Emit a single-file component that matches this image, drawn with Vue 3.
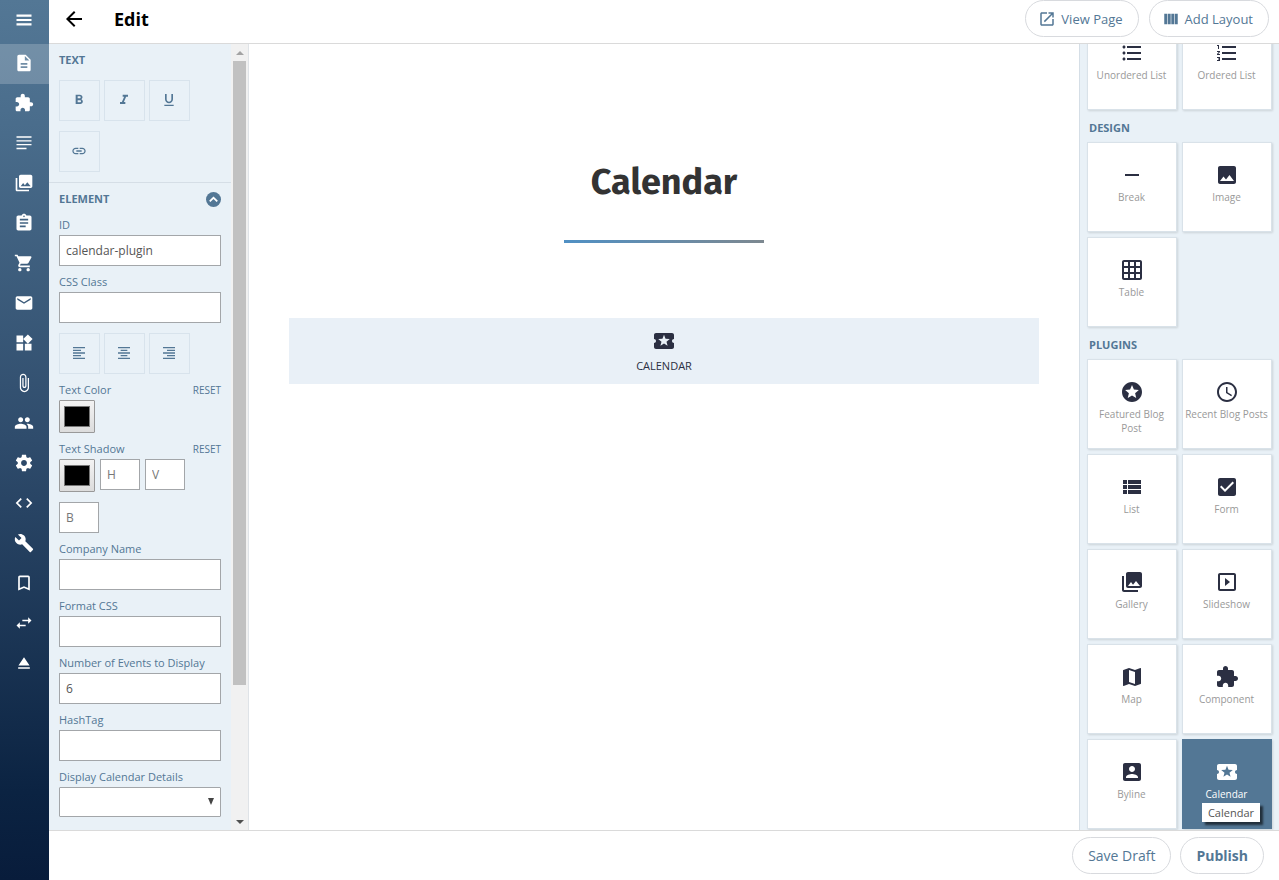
<template>
  <div class="app">
    <nav class="sidebar" aria-label="Main">
      <button class="side-item side-toggle" type="button" aria-label="Menu">
        <svg viewBox="0 0 24 24"><path :d="icons.menu" /></svg>
      </button>
      <a
        v-for="item in sideItems"
        :key="item.icon"
        href="#"
        class="side-item"
        :class="{ active: item.icon === 'file' }"
        :aria-label="item.label"
        @click.prevent
      >
        <svg viewBox="0 0 24 24"><path :d="icons[item.icon]" /></svg>
      </a>
    </nav>

    <div class="workspace">
      <header class="topbar">
        <button class="back" type="button" aria-label="Back">
          <svg viewBox="0 0 24 24"><path :d="icons.back" /></svg>
        </button>
        <h1>Edit</h1>
        <div class="topbar-actions">
          <button class="pill" type="button">
            <svg viewBox="0 0 24 24"><path :d="icons.open" /></svg>
            View Page
          </button>
          <button class="pill" type="button">
            <svg viewBox="0 0 24 24"><path :d="icons.columns" /></svg>
            Add Layout
          </button>
        </div>
      </header>

      <div class="editor">
        <aside class="settings">
          <form class="settings-body" @submit.prevent>
            <section class="group">
              <h2>Text</h2>
              <div class="tools">
                <button v-for="t in textTools" :key="t.icon" class="tool" type="button" :aria-label="t.label">
                  <svg viewBox="0 0 24 24"><path :d="icons[t.icon]" /></svg>
                </button>
              </div>
            </section>

            <section class="group element">
              <div class="group-head">
                <h2>Element</h2>
                <button class="collapse" type="button" aria-label="Collapse">
                  <svg viewBox="0 0 24 24"><path :d="icons.up" /></svg>
                </button>
              </div>

              <div class="field">
                <label for="el-id">ID</label>
                <input id="el-id" v-model="form.id" type="text" />
              </div>
              <div class="field">
                <label for="el-class">CSS Class</label>
                <input id="el-class" v-model="form.cssClass" type="text" />
              </div>

              <div class="tools align">
                <button v-for="t in alignTools" :key="t.icon" class="tool" type="button" :aria-label="t.label">
                  <svg viewBox="0 0 24 24"><path :d="icons[t.icon]" /></svg>
                </button>
              </div>

              <div class="field">
                <div class="field-head">
                  <label for="el-color">Text Color</label>
                  <button class="reset" type="button" @click="form.color = '#000000'">Reset</button>
                </div>
                <input id="el-color" v-model="form.color" type="color" />
              </div>
              <div class="field">
                <div class="field-head">
                  <label for="el-shadow">Text Shadow</label>
                  <button class="reset" type="button" @click="form.shadow = '#000000'">Reset</button>
                </div>
                <div class="shadow-row">
                  <input id="el-shadow" v-model="form.shadow" type="color" />
                  <input v-for="p in ['H', 'V', 'B']" :key="p" class="mini" type="text" :placeholder="p" :aria-label="p" />
                </div>
              </div>

              <div v-for="f in extraFields" :key="f.key" class="field">
                <label :for="'el-' + f.key">{{ f.label }}</label>
                <input :id="'el-' + f.key" v-model="form[f.key]" type="text" />
              </div>
              <div class="field">
                <label for="el-details">Display Calendar Details</label>
                <div class="select-wrap">
                  <select id="el-details" v-model="form.details">
                    <option value=""></option>
                    <option value="yes">Yes</option>
                    <option value="no">No</option>
                  </select>
                  <span class="caret" aria-hidden="true"></span>
                </div>
              </div>
            </section>
          </form>
          <div class="scrollbar" aria-hidden="true">
            <span class="arrow arrow-up"></span>
            <div class="track"><div class="thumb"></div></div>
            <span class="arrow arrow-down"></span>
          </div>
        </aside>

        <main class="canvas">
          <h2 class="page-title">Calendar</h2>
          <div class="rule"></div>
          <div class="block">
            <svg viewBox="0 0 24 24"><path :d="icons.ticket" /></svg>
            <span>Calendar</span>
          </div>
        </main>

        <aside ref="palette" class="palette">
          <section v-for="group in palettes" :key="group.title">
            <h2 v-if="group.title">{{ group.title }}</h2>
            <div class="cards">
              <button
                v-for="c in group.items"
                :key="c.label"
                class="card"
                :class="{ selected: c.icon === 'ticket' }"
                type="button"
              >
                <svg viewBox="0 0 24 24"><path :d="icons[c.icon]" /></svg>
                <span class="card-label">{{ c.label }}</span>
                <span v-if="c.icon === 'ticket'" class="tooltip" role="tooltip">{{ c.label }}</span>
              </button>
            </div>
          </section>
        </aside>
      </div>

      <footer class="bottombar">
        <button class="pill" type="button">Save Draft</button>
        <button class="pill primary" type="button">Publish</button>
      </footer>
    </div>
  </div>
</template>

<script setup>
import { onMounted, reactive, ref } from 'vue'

// 24x24 icon paths
const icons = {
  menu: 'M3 18.500h18v-2.500H3v2.500zm0-5.250h18v-2.500H3v2.500zm0-7.750v2.500h18V5.500H3z',
  file: 'M14 2H6c-1.1 0-1.99.9-1.99 2L4 20c0 1.1.89 2 1.99 2H18c1.1 0 2-.9 2-2V8l-6-6zm2 16H8v-2h8v2zm0-4H8v-2h8v2zm-3-5V3.500L18.500 9H13z',
  puzzle: 'M20.5 11H19V7c0-1.100-.9-2-2-2h-4V3.500C13 2.120 11.880 1 10.500 1S8 2.120 8 3.500V5H4c-1.100 0-1.990.9-1.990 2v3.800H3.500c1.490 0 2.700 1.210 2.700 2.700s-1.210 2.700-2.700 2.700H2V20c0 1.100.9 2 2 2h3.800v-1.500c0-1.490 1.210-2.700 2.700-2.700 1.490 0 2.700 1.210 2.700 2.700V22H17c1.100 0 2-.9 2-2v-4h1.500c1.380 0 2.500-1.120 2.500-2.500S21.880 11 20.500 11z',
  lines: 'M3 4h18v1.600H3zM3 8.600h18v1.600H3zM3 13.200h18v1.600H3zM3 17.800h12v1.600H3z',
  photos: 'M22 16V4c0-1.100-.9-2-2-2H8c-1.100 0-2 .9-2 2v12c0 1.100.9 2 2 2h12c1.100 0 2-.9 2-2zm-11-4l2.030 2.710L16 11l4 5H8l3-4zM2 6v14c0 1.100.9 2 2 2h14v-2H4V6H2z',
  clipboard: 'M19 3h-4.180C14.400 1.840 13.300 1 12 1c-1.300 0-2.400.84-2.820 2H5c-1.100 0-2 .9-2 2v14c0 1.100.9 2 2 2h14c1.100 0 2-.9 2-2V5c0-1.100-.9-2-2-2zm-7 0c.55 0 1 .45 1 1s-.45 1-1 1-1-.45-1-1 .45-1 1-1zm2 14H7v-2h7v2zm3-4H7v-2h10v2zm0-4H7V7h10v2z',
  cart: 'M7 18c-1.100 0-1.990.9-1.990 2S5.900 22 7 22s2-.9 2-2-.9-2-2-2zM1 2v2h2l3.600 7.590-1.350 2.450c-.16.28-.25.61-.25.96 0 1.100.9 2 2 2h12v-2H7.420c-.14 0-.25-.11-.25-.25l.03-.12.9-1.630h7.450c.75 0 1.410-.41 1.750-1.030l3.580-6.490c.08-.14.12-.31.12-.48 0-.55-.45-1-1-1H5.210l-.94-2H1zm16 16c-1.100 0-1.990.9-1.990 2s.89 2 1.990 2 2-.9 2-2-.9-2-2-2z',
  mail: 'M20 4H4c-1.100 0-1.990.9-1.990 2L2 18c0 1.100.9 2 2 2h16c1.100 0 2-.9 2-2V6c0-1.100-.9-2-2-2zm0 4l-8 5-8-5V6l8 5 8-5v2z',
  widgets: 'M13 13v8h8v-8h-8zM3 21h8v-8H3v8zM3 3v8h8V3H3zm13.660-1.310L11 7.340 16.660 13l5.660-5.660-5.660-5.650z',
  clip: 'M16.500 6v11.500c0 2.210-1.790 4-4 4s-4-1.790-4-4V5c0-1.380 1.120-2.500 2.500-2.500s2.500 1.120 2.500 2.500v10.500c0 .55-.45 1-1 1s-1-.45-1-1V6H10v9.500c0 1.380 1.120 2.500 2.500 2.500s2.500-1.120 2.500-2.500V5c0-2.210-1.790-4-4-4S7 2.790 7 5v12.500c0 3.040 2.460 5.500 5.500 5.500s5.500-2.460 5.500-5.500V6h-1.500z',
  people: 'M16 11c1.660 0 2.990-1.340 2.990-3S17.660 5 16 5c-1.660 0-3 1.340-3 3s1.340 3 3 3zm-8 0c1.660 0 2.990-1.340 2.990-3S9.660 5 8 5C6.340 5 5 6.340 5 8s1.340 3 3 3zm0 2c-2.330 0-7 1.170-7 3.500V19h14v-2.500c0-2.330-4.670-3.500-7-3.500zm8 0c-.29 0-.62.02-.97.05 1.160.84 1.970 1.970 1.970 3.450V19h6v-2.500c0-2.330-4.670-3.500-7-3.500z',
  gear: 'M19.430 12.980c.04-.32.07-.64.07-.98s-.03-.66-.07-.98l2.110-1.650c.19-.15.24-.42.12-.64l-2-3.460c-.12-.22-.39-.3-.61-.22l-2.490 1c-.52-.4-1.080-.73-1.690-.98l-.38-2.650C14.460 2.180 14.250 2 14 2h-4c-.25 0-.46.18-.49.42l-.38 2.650c-.61.25-1.170.59-1.690.98l-2.490-1c-.23-.09-.49 0-.61.22l-2 3.460c-.13.22-.07.49.12.64l2.110 1.650c-.04.32-.07.65-.07.98s.03.66.07.98l-2.110 1.650c-.19.15-.24.42-.12.64l2 3.460c.12.22.39.3.61.22l2.490-1c.52.4 1.080.73 1.690.98l.38 2.650c.03.24.24.42.49.42h4c.25 0 .46-.18.49-.42l.38-2.650c.61-.25 1.170-.59 1.690-.98l2.490 1c.23.09.49 0 .61-.22l2-3.460c.12-.22.07-.49-.12-.64l-2.110-1.650zM12 15.500c-1.930 0-3.500-1.570-3.500-3.500s1.570-3.500 3.500-3.500 3.500 1.570 3.500 3.500-1.570 3.500-3.500 3.500z',
  code: 'M9.400 16.600L4.800 12l4.600-4.600L8 6l-6 6 6 6 1.400-1.400zm5.200 0l4.600-4.600-4.600-4.600L16 6l6 6-6 6-1.400-1.400z',
  wrench: 'M22.700 19l-9.100-9.100c.9-2.300.4-5-1.500-6.900-2-2-5-2.400-7.400-1.300L9 6 6 9 1.600 4.700C.4 7.100.9 10.100 2.900 12.100c1.900 1.900 4.600 2.400 6.900 1.500l9.100 9.100c.4.4 1 .4 1.400 0l2.300-2.300c.5-.4.5-1.100.1-1.400z',
  bookmark: 'M17 3H7c-1.100 0-1.990.9-1.990 2L5 21l7-3 7 3V5c0-1.100-.9-2-2-2zm0 15l-5-2.180L7 18V5h10v13z',
  swap: 'M6.990 11L3 15l3.990 4v-3H14v-2H6.990v-3zM21 9l-3.990-4v3H10v2h7.010v3L21 9z',
  eject: 'M5 17h14v2H5zM12 5L5.330 15h13.340z',
  back: 'M20 11H7.830l5.590-5.590L12 4l-8 8 8 8 1.410-1.410L7.830 13H20v-2z',
  open: 'M19 19H5V5h7V3H5c-1.110 0-2 .9-2 2v14c0 1.100.89 2 2 2h14c1.100 0 2-.9 2-2v-7h-2v7zM14 3v2h3.590l-9.830 9.830 1.410 1.410L19 6.410V10h2V3h-7z',
  columns: 'M3 5h3.900v14H3zM7.700 5h3.900v14H7.700zM12.400 5h3.900v14h-3.900zM17.100 5H21v14h-3.900z',
  bold: 'M15.600 10.790c.97-.67 1.650-1.770 1.650-2.790 0-2.260-1.750-4-4-4H7v14h7.040c2.090 0 3.710-1.700 3.710-3.790 0-1.520-.86-2.820-2.150-3.420zM10 6.500h3c.83 0 1.500.67 1.500 1.500s-.67 1.500-1.500 1.500h-3v-3zm3.500 9H10v-3h3.500c.83 0 1.500.67 1.500 1.500s-.67 1.500-1.500 1.500z',
  italic: 'M10 4v3h2.210l-3.420 8H6v3h8v-3h-2.210l3.420-8H18V4z',
  underline: 'M12 17c3.310 0 6-2.690 6-6V3h-2.500v8c0 1.930-1.570 3.500-3.500 3.500S8.500 12.930 8.500 11V3H6v8c0 3.310 2.690 6 6 6zm-7 2v2h14v-2H5z',
  link: 'M3.900 12c0-1.710 1.390-3.100 3.100-3.100h4V7H7c-2.760 0-5 2.240-5 5s2.240 5 5 5h4v-1.900H7c-1.710 0-3.100-1.390-3.100-3.100zM8 13h8v-2H8v2zm9-6h-4v1.900h4c1.710 0 3.100 1.390 3.100 3.100s-1.390 3.100-3.100 3.100h-4V17h4c2.760 0 5-2.240 5-5s-2.240-5-5-5z',
  alignLeft: 'M15 15H3v2h12v-2zm0-8H3v2h12V7zM3 13h18v-2H3v2zm0 8h18v-2H3v2zM3 3v2h18V3H3z',
  alignCenter: 'M7 15v2h10v-2H7zm-4 6h18v-2H3v2zm0-8h18v-2H3v2zm4-6v2h10V7H7zM3 3v2h18V3H3z',
  alignRight: 'M3 21h18v-2H3v2zm6-4h12v-2H9v2zm-6-4h18v-2H3v2zm6-4h12V7H9v2zM3 3v2h18V3H3z',
  up: 'M12 7l-7 7 2 2 5-5 5 5 2-2z',
  bullets: 'M4 10.500c-.83 0-1.500.67-1.500 1.500s.67 1.500 1.500 1.500 1.500-.67 1.500-1.500-.67-1.500-1.500-1.500zm0-6c-.83 0-1.500.67-1.500 1.500S3.170 7.500 4 7.500 5.500 6.830 5.500 6 4.830 4.500 4 4.500zm0 12c-.83 0-1.500.68-1.500 1.500s.68 1.500 1.500 1.500 1.500-.68 1.500-1.500-.67-1.500-1.500-1.500zM7 19h14v-2H7v2zm0-6h14v-2H7v2zm0-8v2h14V5H7z',
  numbers: 'M2 17h2v.5H3v1h1v.5H2v1h3v-4H2v1zm1-9h1V4H2v1h1v3zm-1 3h1.800L2 13.100v.9h3v-1H3.200L5 10.900V10H2v1zm5-6v2h14V5H7zm0 14h14v-2H7v2zm0-6h14v-2H7v2z',
  minus: 'M19 13H5v-2h14v2z',
  image: 'M21 19V5c0-1.100-.9-2-2-2H5c-1.100 0-2 .9-2 2v14c0 1.100.9 2 2 2h14c1.100 0 2-.9 2-2zM8.500 13.500l2.500 3.010L14.500 12l4.500 6H5l3.500-4.500z',
  grid: 'M20 2H4c-1.100 0-2 .9-2 2v16c0 1.100.9 2 2 2h16c1.100 0 2-.9 2-2V4c0-1.100-.9-2-2-2zM8 20H4v-4h4v4zm0-6H4v-4h4v4zm0-6H4V4h4v4zm6 12h-4v-4h4v4zm0-6h-4v-4h4v4zm0-6h-4V4h4v4zm6 12h-4v-4h4v4zm0-6h-4v-4h4v4zm0-6h-4V4h4v4z',
  stars: 'M11.990 2C6.470 2 2 6.480 2 12s4.470 10 9.990 10C17.520 22 22 17.520 22 12S17.520 2 11.990 2zm4.240 16L12 15.450 7.770 18l1.120-4.810-3.730-3.230 4.920-.42L12 5l1.920 4.530 4.920.42-3.730 3.230L16.230 18z',
  clock: 'M11.990 2C6.470 2 2 6.480 2 12s4.470 10 9.990 10C17.520 22 22 17.520 22 12S17.520 2 11.990 2zM12 20c-4.420 0-8-3.580-8-8s3.580-8 8-8 8 3.580 8 8-3.580 8-8 8zm.5-13H11v6l5.250 3.150.75-1.230-4.500-2.670z',
  list: 'M3 14h4v-4H3v4zm0 5h4v-4H3v4zM3 9h4V5H3v4zm5 5h13v-4H8v4zm0 5h13v-4H8v4zM8 5v4h13V5H8z',
  check: 'M19 3H5c-1.110 0-2 .9-2 2v14c0 1.100.89 2 2 2h14c1.110 0 2-.9 2-2V5c0-1.100-.89-2-2-2zm-9 14l-5-5 1.410-1.410L10 14.170l7.590-7.590L19 8l-9 9z',
  slideshow: 'M10 8v8l5-4-5-4zm9-5H5c-1.100 0-2 .9-2 2v14c0 1.100.9 2 2 2h14c1.100 0 2-.9 2-2V5c0-1.100-.9-2-2-2zm0 16H5V5h14v14z',
  map: 'M20.500 3l-.16.03L15 5.100 9 3 3.360 4.900c-.21.07-.36.25-.36.48V20.500c0 .28.22.5.5.5l.16-.03L9 18.900l6 2.100 5.640-1.900c.21-.07.36-.25.36-.48V3.500c0-.28-.22-.5-.5-.5zM15 19l-6-2.110V5l6 2.110V19z',
  person: 'M3 5v14c0 1.100.89 2 2 2h14c1.100 0 2-.9 2-2V5c0-1.100-.9-2-2-2H5c-1.110 0-2 .9-2 2zm12 4c0 1.660-1.340 3-3 3s-3-1.340-3-3 1.340-3 3-3 3 1.340 3 3zm-9 8c0-2 4-3.100 6-3.100s6 1.100 6 3.100v1H6v-1z',
  ticket: 'M20 12c0-1.100.9-2 2-2V6c0-1.100-.9-2-2-2H4c-1.100 0-1.990.9-1.990 2v4c1.100 0 1.990.9 1.990 2s-.89 2-2 2v4c0 1.100.9 2 2 2h16c1.100 0 2-.9 2-2v-4c-1.100 0-2-.9-2-2zm-4.420 4.800L12 14.500l-3.580 2.300 1.080-4.120-3.290-2.690 4.240-.25L12 5.800l1.540 3.950 4.240.25-3.290 2.690 1.090 4.110z',
}

const sideItems = [
  { icon: 'file', label: 'Pages' },
  { icon: 'puzzle', label: 'Components' },
  { icon: 'lines', label: 'Content' },
  { icon: 'photos', label: 'Galleries' },
  { icon: 'clipboard', label: 'Forms' },
  { icon: 'cart', label: 'Products' },
  { icon: 'mail', label: 'Submissions' },
  { icon: 'widgets', label: 'Widgets' },
  { icon: 'clip', label: 'Files' },
  { icon: 'people', label: 'Users' },
  { icon: 'gear', label: 'Settings' },
  { icon: 'code', label: 'Code' },
  { icon: 'wrench', label: 'Tools' },
  { icon: 'bookmark', label: 'Bookmarks' },
  { icon: 'swap', label: 'Switch' },
  { icon: 'eject', label: 'Sign out' },
]

const textTools = [
  { icon: 'bold', label: 'Bold' },
  { icon: 'italic', label: 'Italic' },
  { icon: 'underline', label: 'Underline' },
  { icon: 'link', label: 'Link' },
]

const alignTools = [
  { icon: 'alignLeft', label: 'Align left' },
  { icon: 'alignCenter', label: 'Align center' },
  { icon: 'alignRight', label: 'Align right' },
]

const extraFields = [
  { key: 'company', label: 'Company Name' },
  { key: 'format', label: 'Format CSS' },
  { key: 'count', label: 'Number of Events to Display' },
  { key: 'hashtag', label: 'HashTag' },
]

const palettes = [
  {
    title: '',
    items: [
      { icon: 'bullets', label: 'Unordered List' },
      { icon: 'numbers', label: 'Ordered List' },
    ],
  },
  {
    title: 'Design',
    items: [
      { icon: 'minus', label: 'Break' },
      { icon: 'image', label: 'Image' },
      { icon: 'grid', label: 'Table' },
    ],
  },
  {
    title: 'Plugins',
    items: [
      { icon: 'stars', label: 'Featured Blog Post' },
      { icon: 'clock', label: 'Recent Blog Posts' },
      { icon: 'list', label: 'List' },
      { icon: 'check', label: 'Form' },
      { icon: 'photos', label: 'Gallery' },
      { icon: 'slideshow', label: 'Slideshow' },
      { icon: 'map', label: 'Map' },
      { icon: 'puzzle', label: 'Component' },
      { icon: 'person', label: 'Byline' },
      { icon: 'ticket', label: 'Calendar' },
    ],
  },
]

const form = reactive({
  id: 'calendar-plugin',
  cssClass: '',
  color: '#000000',
  shadow: '#000000',
  company: '',
  format: '',
  count: '6',
  hashtag: '',
  details: '',
})

const palette = ref(null)

// plugins sit at the end of the list, so start there
onMounted(() => {
  palette.value.scrollTop = palette.value.scrollHeight
})
</script>

<style>
body {
  margin: 0;
}
</style>

<style scoped>
.app {
  display: flex;
  height: 100vh;
  font-family: 'Open Sans', 'Noto Sans', sans-serif;
  color: #537795;
  background: #fff;
}

.app *,
.app *::before {
  box-sizing: border-box;
}

button,
input,
select {
  font-family: inherit;
  margin: 0;
}

button {
  cursor: pointer;
  color: inherit;
  padding: 0;
}

h1,
h2 {
  margin: 0;
}

svg {
  display: block;
  flex: none;
  fill: currentColor;
}

/* sidebar */
.sidebar {
  display: flex;
  flex-direction: column;
  flex: none;
  width: 49px;
  color: #fff;
  background: linear-gradient(#537795 0%, #4a6d8c 14%, #2f4c6c 50%, #0b2342 90%, #081c3b 100%);
}

.side-item {
  display: flex;
  align-items: center;
  justify-content: center;
  flex: none;
  height: 40px;
  padding: 0 1px 2px 0;
  border: 0;
  background: none;
  color: #fff;
}

.side-toggle {
  height: 44px;
  padding-bottom: 4px;
}

.side-item.active {
  background: rgba(255, 255, 255, 0.2);
}

.side-item svg {
  width: 20px;
  height: 20px;
}

/* bars */
.workspace {
  display: flex;
  flex-direction: column;
  flex: 1;
  min-width: 0;
}

.topbar {
  display: flex;
  align-items: center;
  flex: none;
  height: 44px;
  padding: 0 10px 6px 13px;
  border-bottom: 1px solid #dadada;
}

.back {
  border: 0;
  background: none;
  color: #000;
}

.back svg {
  width: 24px;
  height: 24px;
}

h1 {
  margin-left: 28px;
  font-size: 18px;
  line-height: 24px;
  font-weight: 700;
  color: #000;
}

.topbar-actions {
  display: flex;
  gap: 10px;
  margin-left: auto;
}

.pill {
  display: flex;
  align-items: center;
  gap: 5px;
  height: 37px;
  padding: 0 15px;
  border: 1px solid #d8dade;
  border-radius: 19px;
  background: #fff;
  color: #537795;
  font-size: 14px;
}

.pill svg {
  width: 18px;
  height: 18px;
}

.topbar .pill {
  padding: 0 15px 0 12px;
  font-size: 13px;
}

.primary {
  font-weight: 700;
}

.bottombar {
  display: flex;
  align-items: center;
  justify-content: flex-end;
  gap: 9px;
  flex: none;
  height: 50px;
  padding-right: 15px;
  border-top: 1px solid #dadada;
}

.editor {
  display: flex;
  flex: 1;
  min-height: 0;
}

/* left settings */
.settings {
  display: flex;
  flex: none;
  width: 200px;
  border-right: 1px solid #dfe3e7;
  background: #e9f1f7;
}

.settings-body {
  flex: 1;
  min-width: 0;
  overflow: hidden;
}

.group {
  padding: 6px 10px 10px;
}

.element {
  border-top: 1px solid #d5dee6;
}

.settings h2,
.palette h2 {
  font-size: 11px;
  line-height: 20px;
  font-weight: 700;
  text-transform: uppercase;
}

.group-head,
.field-head {
  display: flex;
  align-items: center;
  justify-content: space-between;
}

.group-head {
  margin-bottom: 6px;
}

.collapse {
  display: flex;
  align-items: center;
  justify-content: center;
  width: 15px;
  height: 15px;
  border: 0;
  border-radius: 50%;
  background: #537795;
  color: #fff;
}

.collapse svg {
  width: 15px;
  height: 15px;
}

.tools {
  display: flex;
  flex-wrap: wrap;
  gap: 10px 4px;
  padding-top: 10px;
}

.align {
  padding: 4px 0 6px;
}

.tool {
  display: flex;
  align-items: center;
  justify-content: center;
  width: 41px;
  height: 41px;
  padding: 0 1px 1px 0;
  border: 1px solid #d8e3ec;
  background: none;
}

.tool svg {
  width: 16px;
  height: 16px;
}

.field {
  margin-bottom: 6px;
}

.field label {
  display: block;
  font-size: 11px;
  line-height: 20px;
}

.reset {
  border: 0;
  background: none;
  font-size: 10px;
  line-height: 20px;
  text-transform: uppercase;
}

input[type='text'],
select {
  display: block;
  width: 100%;
  height: 31px;
  padding: 0 6px;
  border: 1px solid #a3a6a9;
  border-radius: 0;
  background: #fff;
  color: #555;
  font-size: 12px;
}

input::placeholder {
  color: #777;
}

input[type='color'] {
  display: block;
  width: 36px;
  height: 33px;
  padding: 5px 4px;
  border: 1px solid #999;
  border-radius: 1px;
  background: linear-gradient(#f3f3f3, #dcdcdc);
}

input[type='color']::-webkit-color-swatch-wrapper {
  padding: 0;
}

input[type='color']::-webkit-color-swatch {
  border: 1px solid #777;
}

.shadow-row {
  display: flex;
  flex-wrap: wrap;
  gap: 10px 5px;
}

.shadow-row .mini {
  width: 40px;
}

.select-wrap {
  position: relative;
}

select {
  appearance: none;
  height: 30px;
  border-radius: 1px;
}

.caret {
  position: absolute;
  right: 7px;
  top: 11px;
  border: solid transparent;
  border-width: 7px 3px 0;
  border-top-color: #444;
  pointer-events: none;
}

.scrollbar {
  display: flex;
  flex-direction: column;
  align-items: center;
  flex: none;
  width: 17px;
  background: #f1f1f1;
}

.track {
  flex: 1;
  width: 13px;
}

.thumb {
  height: 83%;
  background: #c1c1c1;
}

.arrow {
  display: flex;
  align-items: center;
  height: 17px;
}

.arrow::before {
  content: '';
  border: 4px solid transparent;
}

.arrow-up::before {
  border-top-width: 0;
  border-bottom-color: #a3a3a3;
}

.arrow-down::before {
  border-bottom-width: 0;
  border-top-color: #505050;
}

/* canvas */
.canvas {
  flex: 1;
  min-width: 0;
  padding: 112px 40px 0;
  overflow: auto;
}

.page-title {
  font-family: 'Fira Sans', 'Noto Sans', 'Open Sans', sans-serif;
  font-size: 36px;
  line-height: 52px;
  font-weight: 700;
  color: #333;
  text-align: center;
}

.rule {
  width: 200px;
  height: 3px;
  margin: 32px auto 75px;
  background: linear-gradient(90deg, #5090c4, #7d8890);
}

.block {
  display: flex;
  flex-direction: column;
  align-items: center;
  height: 66px;
  padding-top: 11px;
  gap: 3px;
  background: #e9f0f7;
  color: #2b2f42;
  font-size: 11px;
  line-height: 20px;
  text-transform: uppercase;
}

.block svg {
  width: 24px;
  height: 24px;
}

/* right palette */
.palette {
  flex: none;
  width: 200px;
  padding: 0 7px 1px;
  border-left: 1px solid #d5dee6;
  background: #e9f1f7;
  overflow-y: auto;
  scrollbar-width: none;
}

.palette h2 {
  padding: 8px 2px 4px;
}

.cards {
  display: grid;
  grid-template-columns: repeat(2, 90px);
  gap: 5px;
}

.card {
  position: relative;
  display: flex;
  flex-direction: column;
  align-items: center;
  gap: 3px;
  height: 90px;
  padding: 20px 2px 0 1px;
  border: 1px solid #d9e2e9;
  background: #fff;
  box-shadow: 1px 1px 2px rgba(0, 0, 0, 0.12);
  color: #2b2f42;
}

.card svg {
  width: 24px;
  height: 24px;
}

.card-label {
  font-size: 10px;
  line-height: 14px;
  color: #999;
}

.card.selected {
  border-color: #537795;
  background: #537795;
  color: #fff;
}

.selected .card-label {
  color: #fff;
}

.tooltip {
  position: absolute;
  right: 11px;
  bottom: 6px;
  padding: 0 6px;
  background: #fff;
  box-shadow: 3px 3px 2px rgba(0, 0, 0, 0.6);
  color: #555;
  font-size: 11px;
  line-height: 19px;
}
</style>
